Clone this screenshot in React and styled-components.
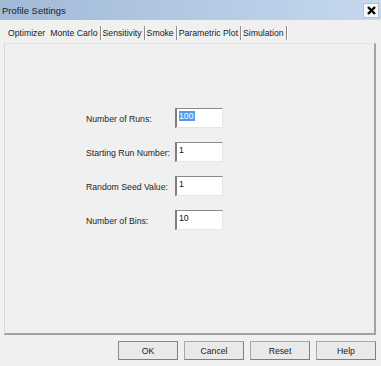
import React from "react";
import styled, { createGlobalStyle } from "styled-components";

const Global = createGlobalStyle`
  html, body { margin: 0; padding: 0; background: #f0f0f0; }
  body { font-family: "Liberation Sans", Arial, sans-serif; }
`;

const Window = styled.div`
  width: 381px;
  height: 366px;
  display: flex;
  flex-direction: column;
  background: #f0f0f0;
  overflow: hidden;
`;

const TitleBar = styled.div`
  height: 20px;
  flex: 0 0 20px;
  display: flex;
  align-items: center;
  justify-content: space-between;
  padding: 0 2px 0 2px;
  background: linear-gradient(90deg, #a1bad9 0%, #b5cae5 55%, #c5d8ee 100%);
`;

const Title = styled.span`
  font-size: 9.4px;
  color: #1c1c1c;
  letter-spacing: 0.05px;
`;

const CloseButton = styled.div`
  width: 14px;
  height: 13px;
  display: flex;
  align-items: center;
  justify-content: center;
  background: #f6f7f9;
  border: 1px solid #b8c2cf;
  margin-top: 1px;
`;

const TabStrip = styled.div`
  height: 23px;
  flex: 0 0 23px;
  display: flex;
  align-items: flex-start;
  padding: 6px 0 0 7px;
  box-sizing: border-box;
`;

const Tab = styled.div`
  height: 14px;
  line-height: 14px;
  padding: 0 2px 0 1px;
  font-size: 8.7px;
  color: #1a1a1a;
  border-right: 1px solid ${(p) => (p.$noSep ? "transparent" : "#8c8c8c")};
  box-shadow: ${(p) => (p.$noSep ? "none" : "1px 0 0 #ffffff")};
  margin-right: 1px;
  white-space: nowrap;
`;

const Panel = styled.div`
  flex: 0 0 292px;
  margin: 0 5px 0 4px;
  border-top: 1px solid #e3e3e3;
  border-left: 1px solid #d8d8d8;
  border-right: 2px solid #a3a3a3;
  border-bottom: 2px solid #a3a3a3;
  box-sizing: border-box;
  padding: 64px 0 0 81px;
`;

const Form = styled.div`
  display: grid;
  grid-template-columns: 89px 48px;
  row-gap: 14px;
  align-items: center;
`;

const Label = styled.div`
  font-size: 8.7px;
  color: #1e1e1e;
  padding-top: 2px;
  white-space: nowrap;
`;

const Field = styled.div`
  width: 48px;
  height: 20px;
  box-sizing: border-box;
  background: #fff;
  border-top: 1px solid #8a8a8a;
  border-left: 2px solid #7d7d7d;
  border-right: 1px solid #e6e6e6;
  border-bottom: 1px solid #e6e6e6;
  padding: 1px 2px;
  font-size: 8.7px;
  line-height: 12px;
  color: #111;
`;

const Selected = styled.span`
  background: #4f9cf0;
  color: #fff;
  padding: 0 1px 0 0;
`;

const ButtonRow = styled.div`
  display: flex;
  justify-content: flex-end;
  gap: 6px;
  padding: 6px 5px 0 0;
`;

const Button = styled.div`
  width: 60px;
  height: 19px;
  box-sizing: border-box;
  display: flex;
  align-items: center;
  justify-content: center;
  font-size: 8.7px;
  color: #1a1a1a;
  background: #e9e9e9;
  border: 1px solid ${(p) => (p.$primary ? "#8a8a8a" : "#a8a8a8")};
  border-right-color: #7e7e7e;
  border-bottom-color: #7e7e7e;
`;

const fields = [
  { label: "Number of Runs:", value: "100", selected: true },
  { label: "Starting Run Number:", value: "1" },
  { label: "Random Seed Value:", value: "1" },
  { label: "Number of Bins:", value: "10" },
];

const tabs = ["Optimizer", "Monte Carlo", "Sensitivity", "Smoke", "Parametric Plot", "Simulation"];

export default function App() {
  return (
    <>
      <Global />
      <Window>
        <TitleBar>
          <Title>Profile Settings</Title>
          <CloseButton>
            <svg width="9" height="9" viewBox="0 0 9 9">
              <path d="M1 1 L8 8 M8 1 L1 8" stroke="#000" strokeWidth="2.4" />
            </svg>
          </CloseButton>
        </TitleBar>
        <TabStrip>
          {tabs.map((t, i) => (
            <Tab key={t} $noSep={i === 0}>
              {t}
            </Tab>
          ))}
        </TabStrip>
        <Panel>
          <Form>
            {fields.map((f) => (
              <React.Fragment key={f.label}>
                <Label>{f.label}</Label>
                <Field>{f.selected ? <Selected>{f.value}</Selected> : f.value}</Field>
              </React.Fragment>
            ))}
          </Form>
        </Panel>
        <ButtonRow>
          <Button $primary>OK</Button>
          <Button>Cancel</Button>
          <Button>Reset</Button>
          <Button>Help</Button>
        </ButtonRow>
      </Window>
    </>
  );
}
